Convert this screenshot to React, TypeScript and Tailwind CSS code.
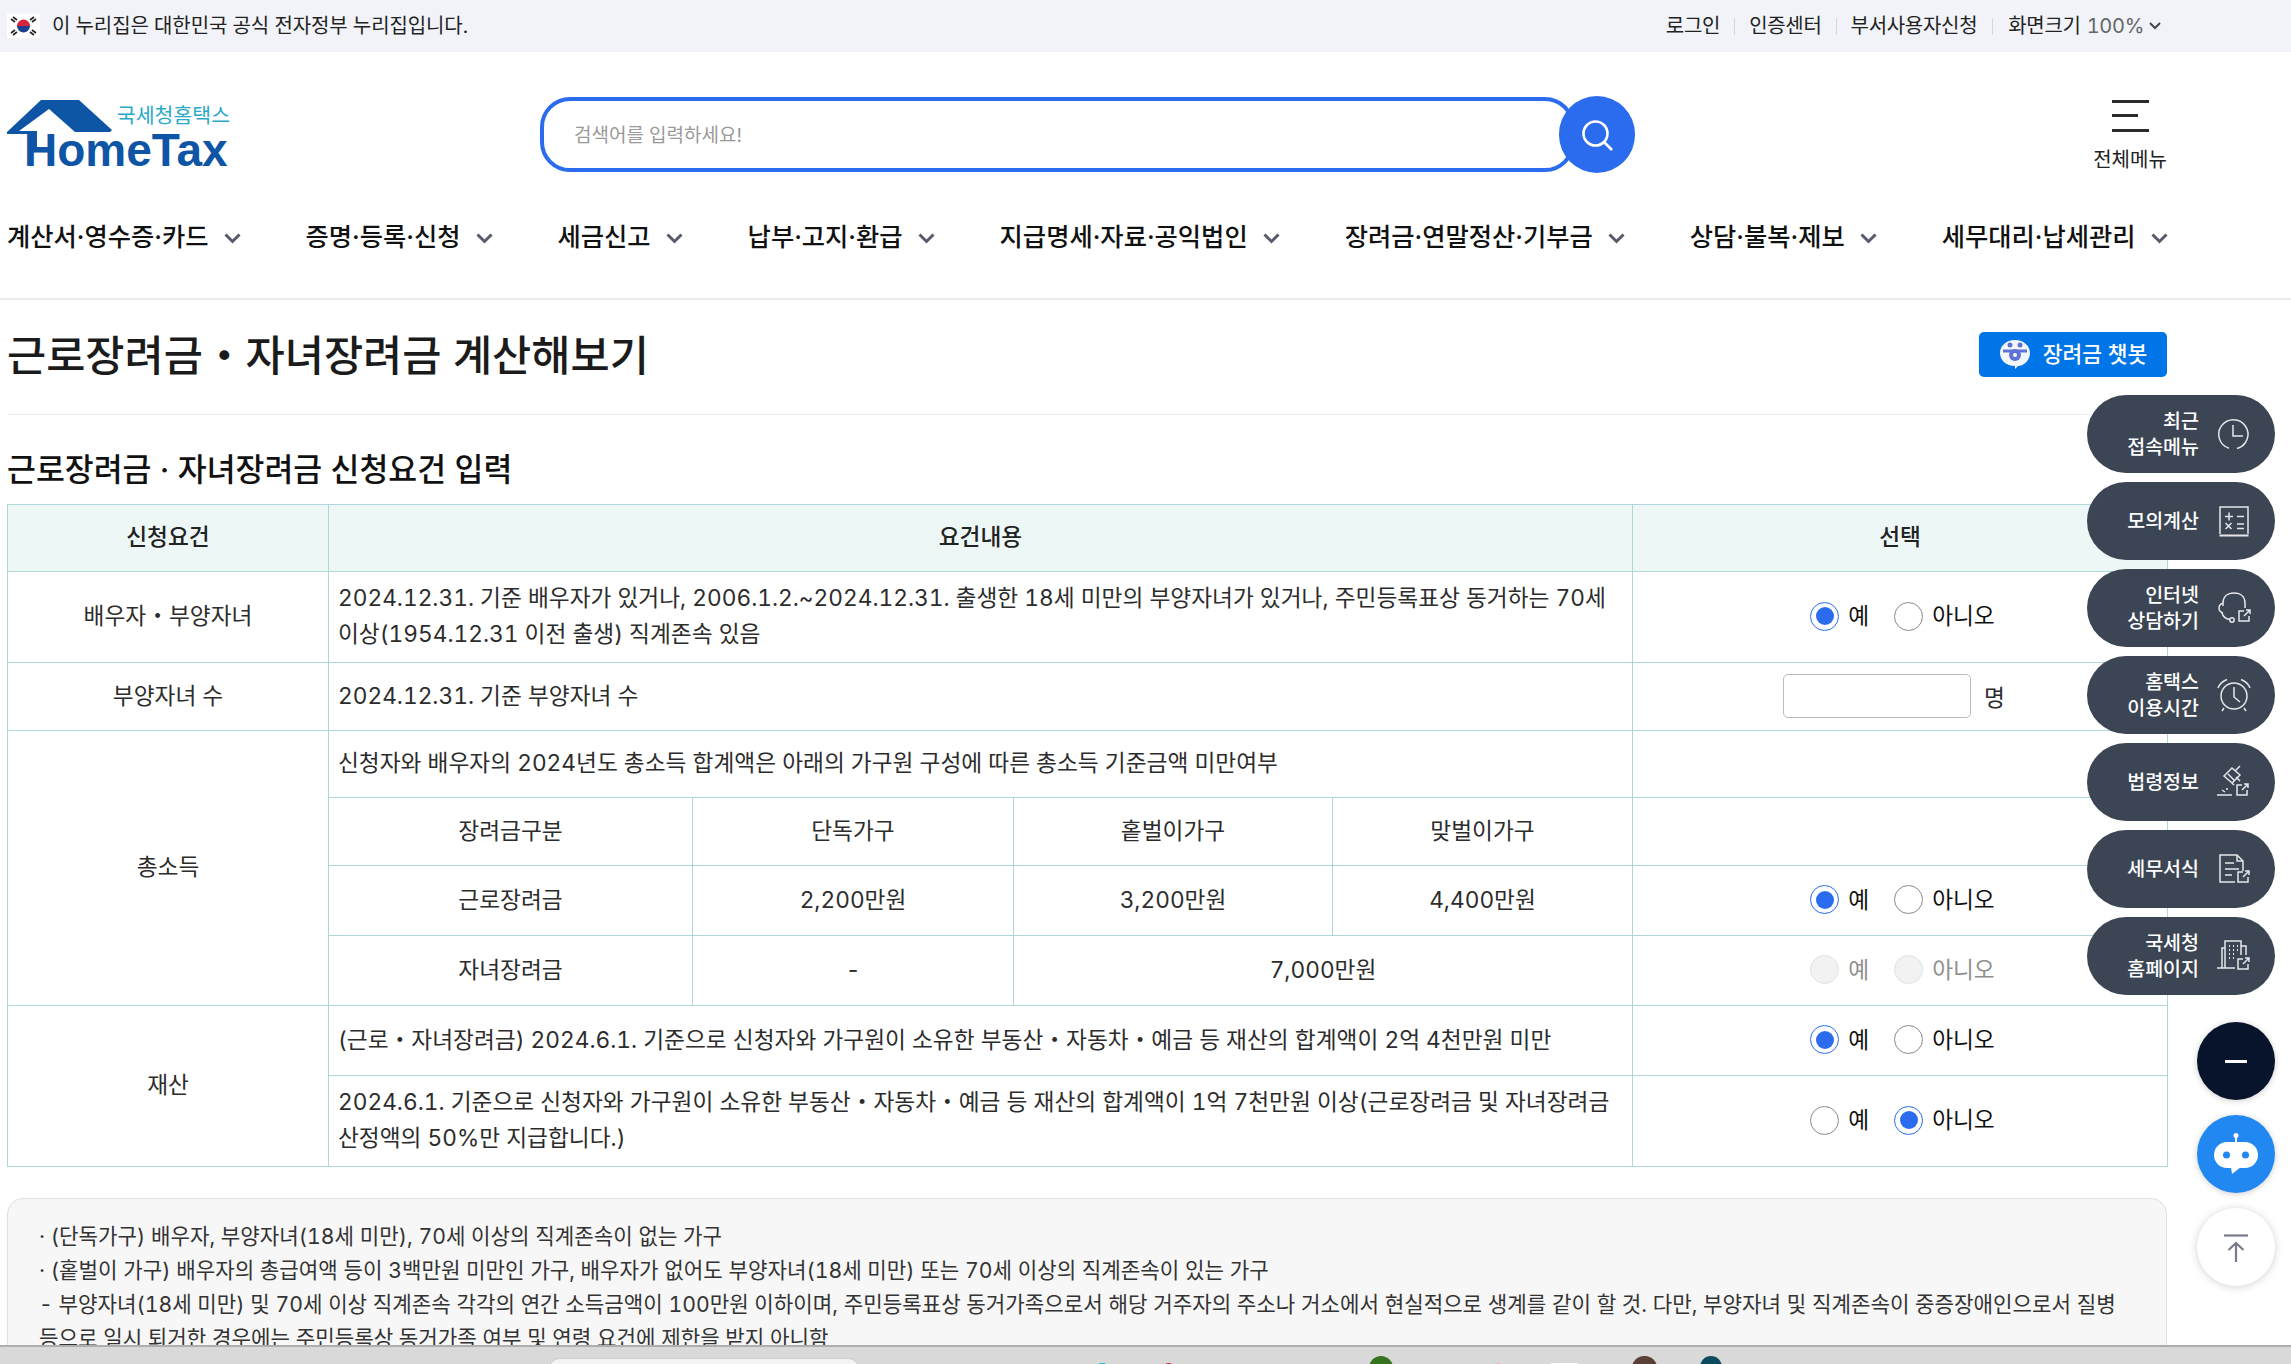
import type { ReactNode } from "react";

const NAV = [
  "계산서·영수증·카드",
  "증명·등록·신청",
  "세금신고",
  "납부·고지·환급",
  "지급명세·자료·공익법인",
  "장려금·연말정산·기부금",
  "상담·불복·제보",
  "세무대리·납세관리",
];

const Ext = ({ x, y }: { x: number; y: number }) => (
  <g transform={`translate(${x} ${y})`}>
    <path d="M6 1H1v10h10V6" />
    <path d="M6 6l6-6M8 0h4v4" />
  </g>
);

const Icon = ({ children }: { children: ReactNode }) => (
  <svg viewBox="0 0 36 36" className="h-[36px] w-[36px] shrink-0" fill="none" stroke="#e4e6ea" strokeWidth="1.5">
    {children}
  </svg>
);

const SIDE: { label: string[]; icon: ReactNode }[] = [
  {
    label: ["최근", "접속메뉴"],
    icon: (
      <Icon>
        <path d="M21 32.5A14.6 14.6 0 1 0 13 32.3" />
        <path d="M26 30a14.6 14.6 0 0 0 3-2.8" />
        <path d="M17 9v11h10" />
      </Icon>
    ),
  },
  {
    label: ["모의계산"],
    icon: (
      <Icon>
        <path d="M4 31V4h28v27" />
        <path d="M3.5 32.5h29" strokeWidth="2" />
        <path d="M9 13.5h8M13 9.5v8M21 13.5h7M9.5 20l6 6M15.5 20l-6 6M21 21h7M21 25.5h7" />
      </Icon>
    ),
  },
  {
    label: ["인터넷", "상담하기"],
    icon: (
      <Icon>
        <path d="M7 16V13C7 7 11 3 18 3s11 4 11 10v5" />
        <path d="M7 13C4 14 3 16 3 18s1 4 4 5" />
        <path d="M6 23c1 4 4 6 8 6.5" />
        <circle cx="16" cy="30" r="2.2" />
        <Ext x={22} y={20} />
      </Icon>
    ),
  },
  {
    label: ["홈택스", "이용시간"],
    icon: (
      <Icon>
        <circle cx="18" cy="19" r="13" />
        <path d="M18 10v10l6 5M2 11C4 6 7 4 11 2.5M34 11C32 6 29 4 25 2.5M8 31l-2 3M28 31l2 3" />
      </Icon>
    ),
  },
  {
    label: ["법령정보"],
    icon: (
      <Icon>
        <path d="M8 12l8-8 8 7-8 8zM12 10l6 6M19 7l5-5M14 17l4 4M20 13l4 4" />
        <path d="M1 31h15M6 26l3 2M11 24v2" />
        <Ext x={20} y={20} />
      </Icon>
    ),
  },
  {
    label: ["세무서식"],
    icon: (
      <Icon>
        <path d="M19 31H4V4h17l6 6v10" />
        <path d="M21 4v6h6M9 12h9M9 18h14M9 24h7" />
        <Ext x={21} y={20} />
      </Icon>
    ),
  },
  {
    label: ["국세청", "홈페이지"],
    icon: (
      <Icon>
        <path d="M1 30h18M6 30V10h3M9 30V3h16v14M25 8h5v9" />
        <path d="M13 8h1M17 8h1M21 8h1M13 12h1M17 12h1M21 12h1M13 16h1M17 16h1M13 20h1M17 20h1" strokeWidth="1.8" />
        <Ext x={21} y={20} />
      </Icon>
    ),
  },
];

const Radio = ({ on, disabled }: { on?: boolean; disabled?: boolean }) => {
  const ring = disabled
    ? "border-[#e2e2e2] bg-[#f2f2f2]"
    : on
      ? "border-[#2b6bed] bg-white"
      : "border-[#8a8a8a] bg-white";
  return (
    <span className={`flex h-[29px] w-[29px] shrink-0 items-center justify-center rounded-full border ${ring}`}>
      {on ? <span className="h-[18px] w-[18px] rounded-full bg-[#2b6bed]" /> : null}
    </span>
  );
};

const YesNo = ({ value, disabled }: { value?: "y" | "n"; disabled?: boolean }) => (
  <div className={`flex items-center justify-center pl-[5px] ${disabled ? "text-[#8f8f8f]" : "text-[#111]"}`}>
    <Radio on={value === "y"} disabled={disabled} />
    <span className="ml-[9px] mr-[25px]">예</span>
    <Radio on={value === "n"} disabled={disabled} />
    <span className="ml-[9px]">아니오</span>
  </div>
);

const td = "border border-[#b0d5da] px-[9px] pb-[2px] align-middle";
const tc = `${td} text-center`;

export default function App() {
  return (
    <div className="relative flex h-[1364px] w-full flex-col overflow-hidden bg-white font-['Inter','Noto_Sans_CJK_KR',sans-serif] tabular-nums text-[#222]">
      {/* gov banner */}
      <div className="flex h-[52px] shrink-0 items-center justify-between bg-[#f1f3f8] pl-[7px] pr-[130px] text-[20px]">
        <div className="flex items-center">
          <svg viewBox="0 0 33 24" className="h-[24px] w-[33px] bg-white">
            <path d="M10 12a6.5 6.5 0 0 1 13 0z" fill="#d6243b" />
            <path d="M10 12a6.5 6.5 0 0 0 13 0z" fill="#1d3f8f" />
            <path d="M4 5l4 3M6 3l4 3M29 5l-4 3M27 3l-4 3M4 19l4-3M6 21l4-3M29 19l-4-3M27 21l-4-3" stroke="#222" strokeWidth="1.6" />
          </svg>
          <span className="ml-[12px] tracking-[-0.1px]">이 누리집은 대한민국 공식 전자정부 누리집입니다.</span>
        </div>
        <div className="flex items-center tracking-[-0.3px]">
          <span>로그인</span>
          <span className="mx-[14px] h-[17px] w-px bg-[#d5d7dc]" />
          <span>인증센터</span>
          <span className="mx-[14px] h-[17px] w-px bg-[#d5d7dc]" />
          <span>부서사용자신청</span>
          <span className="mx-[15px] h-[17px] w-px bg-[#d5d7dc]" />
          <span>화면크기</span>
          <span className="ml-[6px] text-[#666]">100%</span>
          <svg viewBox="0 0 12 8" className="ml-[5px] h-[8px] w-[12px]" fill="none" stroke="#444" strokeWidth="2">
            <path d="M1 1l5 5 5-5" />
          </svg>
        </div>
      </div>

      {/* logo, search, all menu */}
      <div className="flex h-[147px] shrink-0 items-start pl-[7px]">
        <div className="relative mt-[48px] h-[70px] w-[223px] shrink-0">
          <svg viewBox="0 0 120 50" className="absolute left-0 top-0 h-[50px] w-[120px]">
            <path d="M0 32L34 0h38l33 30-2 2H68L42 9 12 31h18v16h-8V34H0z" fill="#0f55a5" />
          </svg>
          <span className="absolute right-0 top-[2px] text-[20.5px] leading-[28px] text-[#2aa9c9]">국세청홈택스</span>
          <span className="absolute bottom-[2px] left-[17px] font-['Liberation_Sans',sans-serif] text-[46px] font-bold leading-[36px] text-[#0f55a5]">HomeTax</span>
        </div>
        <div className="relative ml-[310px] mt-[45px] flex h-[75px] w-[1035px] shrink-0 items-center rounded-[30px] border-[4px] border-[#2b6bed] pl-[30px] pt-[3px] text-[19px] text-[#9a9a9a]">
          검색어를 입력하세요!
          <span className="absolute right-[-64px] top-[-5px] flex h-[77px] w-[76px] items-center justify-center rounded-full bg-[#2b6bed]">
            <svg viewBox="0 0 36 36" className="h-[36px] w-[36px]" fill="none" stroke="#fff" strokeWidth="2.6">
              <circle cx="16.5" cy="16.5" r="12" />
              <path d="M25 25l8 8" />
            </svg>
          </span>
        </div>
        <div className="ml-[519px] mt-[48px] flex w-[72px] flex-col items-center">
          <span className="h-[3px] w-[37px] bg-[#2b2b2b]" />
          <span className="mt-[11px] h-[3px] w-[26px] -translate-x-[5px] bg-[#2b2b2b]" />
          <span className="mt-[12px] h-[3px] w-[37px] bg-[#2b2b2b]" />
          <span className="mt-[15px] whitespace-nowrap text-[20px] leading-[26px]">전체메뉴</span>
        </div>
      </div>

      {/* main nav */}
      <nav className="flex h-[101px] shrink-0 items-start gap-[65px] border-b-2 border-[#ebebeb] pl-[7px] pt-[19px]">
        {NAV.map((n) => (
          <div key={n} className="flex items-center whitespace-nowrap text-[25.3px] font-medium leading-[38px] text-[#111]">
            {n}
            <svg viewBox="0 0 17 11" className="ml-[15px] mt-[3px] h-[11px] w-[17px]" fill="none" stroke="#565a6a" strokeWidth="3">
              <path d="M1.5 1.5l7 7 7-7" />
            </svg>
          </div>
        ))}
      </nav>

      {/* page content */}
      <main className="min-h-0 flex-1 overflow-hidden pl-[7px] pr-[124px]">
        <div className="flex h-[115px] items-center justify-between border-b border-[#ececf2] pb-[3px]">
          <h1 className="text-[42.6px] font-medium leading-[56px] text-[#1b1b1b]">근로장려금・자녀장려금 계산해보기</h1>
          <span className="mb-[3px] flex h-[45px] w-[188px] items-center justify-center rounded-[5px] bg-[#0075e8] text-[21.5px] font-medium text-white">
            <svg viewBox="0 0 32 30" className="mr-[12px] h-[30px] w-[32px]">
              <path d="M16 1c9 0 15 6 15 13s-6 13-12 13l-3 3v-3C7 27 1 21 1 14S7 1 16 1z" fill="#f3f6fd" />
              <circle cx="16" cy="16" r="6" fill="#5f72d8" />
              <path d="M4 12h24" stroke="#5f72d8" strokeWidth="3" />
              <circle cx="11" cy="6" r="2.5" fill="#5f72d8" />
              <circle cx="21" cy="6" r="2.5" fill="#5f72d8" />
              <circle cx="16" cy="16" r="2" fill="#fff" />
            </svg>
            장려금 챗봇
          </span>
        </div>

        <h2 className="flex h-[89px] items-end pb-[13px] text-[31.4px] font-medium leading-[42px] text-[#111]">근로장려금 · 자녀장려금 신청요건 입력</h2>

        <table className="w-[2160px] table-fixed border-collapse break-keep text-[22.7px] leading-[36px] text-[#2c2c2c]">
          <colgroup>
            <col className="w-[321px]" />
            <col className="w-[364px]" />
            <col className="w-[321px]" />
            <col className="w-[319px]" />
            <col className="w-[300px]" />
            <col className="w-[535px]" />
          </colgroup>
          <thead>
            <tr className="h-[67px] bg-[#edf7f6] text-[#222]">
              <th className={`${tc} font-medium`}>신청요건</th>
              <th className={`${tc} font-medium`} colSpan={4}>요건내용</th>
              <th className={`${tc} font-medium`}>선택</th>
            </tr>
          </thead>
          <tbody>
            <tr className="h-[91px]">
              <td className={tc}>배우자・부양자녀</td>
              <td className={td} colSpan={4}>2024.12.31. 기준 배우자가 있거나, 2006.1.2.~2024.12.31. 출생한 18세 미만의 부양자녀가 있거나, 주민등록표상 동거하는 70세 이상(1954.12.31 이전 출생) 직계존속 있음</td>
              <td className={td}><YesNo value="y" /></td>
            </tr>
            <tr className="h-[68px]">
              <td className={tc}>부양자녀 수</td>
              <td className={td} colSpan={4}>2024.12.31. 기준 부양자녀 수</td>
              <td className={td}>
                <div className="flex items-center pl-[141px]">
                  <input className="h-[44px] w-[188px] rounded-[5px] border border-[#bbbbbb] bg-white" />
                  <span className="ml-[13px] mt-[4px]">명</span>
                </div>
              </td>
            </tr>
            <tr className="h-[67px]">
              <td className={tc} rowSpan={4}>총소득</td>
              <td className={td} colSpan={4}>신청자와 배우자의 2024년도 총소득 합계액은 아래의 가구원 구성에 따른 총소득 기준금액 미만여부</td>
              <td className={td} />
            </tr>
            <tr className="h-[68px]">
              <td className={tc}>장려금구분</td>
              <td className={tc}>단독가구</td>
              <td className={tc}>홑벌이가구</td>
              <td className={tc}>맞벌이가구</td>
              <td className={td} />
            </tr>
            <tr className="h-[70px]">
              <td className={tc}>근로장려금</td>
              <td className={tc}>2,200만원</td>
              <td className={tc}>3,200만원</td>
              <td className={tc}>4,400만원</td>
              <td className={td}><YesNo value="y" /></td>
            </tr>
            <tr className="h-[70px]">
              <td className={tc}>자녀장려금</td>
              <td className={tc}>-</td>
              <td className={tc} colSpan={2}>7,000만원</td>
              <td className={td}><YesNo disabled /></td>
            </tr>
            <tr className="h-[70px]">
              <td className={tc} rowSpan={2}>재산</td>
              <td className={td} colSpan={4}>(근로・자녀장려금) 2024.6.1. 기준으로 신청자와 가구원이 소유한 부동산・자동차・예금 등 재산의 합계액이 2억 4천만원 미만</td>
              <td className={td}><YesNo value="y" /></td>
            </tr>
            <tr className="h-[91px]">
              <td className={td} colSpan={4}>2024.6.1. 기준으로 신청자와 가구원이 소유한 부동산・자동차・예금 등 재산의 합계액이 1억 7천만원 이상(근로장려금 및 자녀장려금 산정액의 50%만 지급합니다.)</td>
              <td className={td}><YesNo value="n" /></td>
            </tr>
          </tbody>
        </table>

        {/* notes */}
        <div className="mt-[31px] h-[300px] break-keep rounded-[16px] border border-[#e0e0e0] bg-[#f7f7f7] pl-[31px] pr-[20px] pt-[20px] text-[21.2px] leading-[34px] text-[#333]">
          <p>· (단독가구) 배우자, 부양자녀(18세 미만), 70세 이상의 직계존속이 없는 가구</p>
          <p>· (홑벌이 가구) 배우자의 총급여액 등이 3백만원 미만인 가구, 배우자가 없어도 부양자녀(18세 미만) 또는 70세 이상의 직계존속이 있는 가구</p>
          <p>- 부양자녀(18세 미만) 및 70세 이상 직계존속 각각의 연간 소득금액이 100만원 이하이며, 주민등록표상 동거가족으로서 해당 거주자의 주소나 거소에서 현실적으로 생계를 같이 할 것. 다만, 부양자녀 및 직계존속이 중증장애인으로서 질병 등으로 일시 퇴거한 경우에는 주민등록상 동거가족 여부 및 연령 요건에 제한을 받지 아니함</p>
        </div>
      </main>

      {/* browser download shelf peeking in at the bottom */}
      <div className="flex h-[19px] shrink-0 items-start overflow-hidden border-t-2 border-[#aeaeae] bg-[#d9d9d9]">
        <span className="ml-[548px] mt-[11px] h-[20px] w-[312px] rounded-t-[12px] border border-[#cccccc] bg-[#f4f4f4]" />
        <span className="ml-[235px] mt-[16px] h-[14px] w-[15px] rounded-full bg-[#2bb5cc]" />
        <span className="ml-[52px] mt-[16px] h-[14px] w-[13px] rounded-full bg-[#c8284a]" />
        <span className="ml-[194px] mt-[9px] h-[24px] w-[24px] rounded-full bg-[#36731f]" />
        <span className="ml-[99px] mt-[16px] h-[14px] w-[13px] rounded-full bg-[#e8b9c4]" />
        <span className="ml-[45px] mt-[16px] h-[14px] w-[29px] rounded-[3px] bg-white" />
        <span className="ml-[53px] mt-[9px] h-[24px] w-[25px] rounded-full bg-[#5a4036]" />
        <span className="ml-[43px] mt-[9px] h-[24px] w-[22px] rounded-full bg-[#0c4a5e]" />
      </div>

      {/* floating quick menu */}
      <aside className="absolute right-[16px] top-[395px] flex w-[188px] flex-col items-end gap-[9px]">
        {SIDE.map((s) => (
          <div key={s.label[0]} className="flex h-[78px] w-[188px] items-center justify-end rounded-full bg-[#3c4554] pr-[23px] text-[19.5px] font-medium leading-[26px] text-white">
            <div className="text-right">
              {s.label.map((l) => <div key={l}>{l}</div>)}
            </div>
            <span className="ml-[17px]">{s.icon}</span>
          </div>
        ))}
        <button className="mt-[18px] flex h-[78px] w-[78px] items-center justify-center rounded-full bg-[#07142b] shadow-[0_1px_6px_rgba(0,0,0,0.2)]">
          <span className="h-[3px] w-[22px] bg-white" />
        </button>
        <button className="mt-[6px] flex h-[78px] w-[78px] items-center justify-center rounded-full bg-[#2088f0] shadow-[0_1px_6px_rgba(0,0,0,0.2)]">
          <svg viewBox="0 0 46 44" className="h-[44px] w-[46px]">
            <circle cx="23" cy="3.5" r="2.5" fill="#fff" />
            <path d="M23 5v6" stroke="#fff" strokeWidth="2" />
            <rect x="1" y="10" width="44" height="26" rx="13" fill="#fff" />
            <path d="M18 35h10l-9 7z" fill="#fff" />
            <circle cx="13.5" cy="23" r="3.5" fill="#2088f0" />
            <circle cx="32.5" cy="23" r="3.5" fill="#2088f0" />
          </svg>
        </button>
        <button className="mt-[6px] flex h-[78px] w-[78px] items-center justify-center rounded-full bg-white shadow-[0_1px_8px_rgba(0,0,0,0.18)]">
          <svg viewBox="0 0 24 30" className="mt-[3px] h-[30px] w-[24px]" fill="none" stroke="#777b8c" strokeWidth="2.2">
            <path d="M0 1.5h24" />
            <path d="M12 28V9M4.5 16L12 9l7.5 7" />
          </svg>
        </button>
      </aside>
    </div>
  );
}
